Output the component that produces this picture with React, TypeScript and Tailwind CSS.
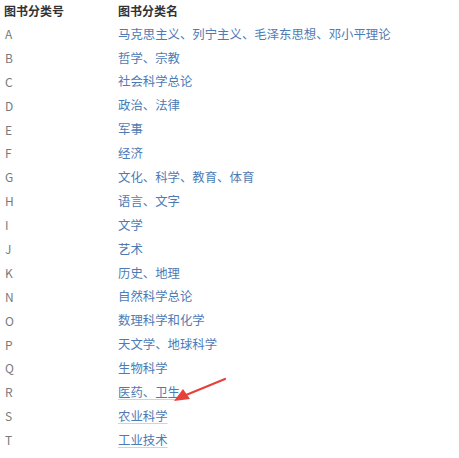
const rows: [string, string, boolean?][] = [
  ["A", "马克思主义、列宁主义、毛泽东思想、邓小平理论"],
  ["B", "哲学、宗教"],
  ["C", "社会科学总论"],
  ["D", "政治、法律"],
  ["E", "军事"],
  ["F", "经济"],
  ["G", "文化、科学、教育、体育"],
  ["H", "语言、文字"],
  ["I", "文学"],
  ["J", "艺术"],
  ["K", "历史、地理"],
  ["N", "自然科学总论"],
  ["O", "数理科学和化学"],
  ["P", "天文学、地球科学"],
  ["Q", "生物科学"],
  ["R", "医药、卫生", true],
  ["S", "农业科学", true],
  ["T", "工业技术", true],
  ["U", "交通运输"],
];

export default function App() {
  return (
    <div
      className="relative w-[459px] h-[458px] overflow-hidden bg-white text-[12px]"
      style={{ fontFamily: '"Noto Sans CJK SC", "Noto Sans", sans-serif' }}
    >
      <div className="flex h-[22px] items-center font-bold text-[#333]">
        <div className="w-[118px] pl-[4px]">图书分类号</div>
        <div>图书分类名</div>
      </div>
      {rows.map(([code, name, underline]) => (
        <div key={code} className="flex h-[23.9px] items-center">
          <div className="w-[118px] pl-[5px] text-[#7a7a7a]">{code}</div>
          <div
            className={
              underline
                ? "text-[12.4px] text-[#4d7bb6] underline decoration-[#c9d5e6] underline-offset-2"
                : "text-[12.4px] text-[#4d7bb6]"
            }
          >
            {name}
          </div>
        </div>
      ))}

      {/* red annotation arrow */}
      <svg
        className="absolute left-0 top-0 pointer-events-none"
        width="459"
        height="458"
        viewBox="0 0 459 458"
      >
        <line
          x1="225"
          y1="379"
          x2="186"
          y2="395"
          stroke="#e6413b"
          strokeWidth="2.2"
          strokeLinecap="round"
        />
        <polygon points="174,401 183,389 190,399" fill="#e6413b" />
      </svg>
    </div>
  );
}
